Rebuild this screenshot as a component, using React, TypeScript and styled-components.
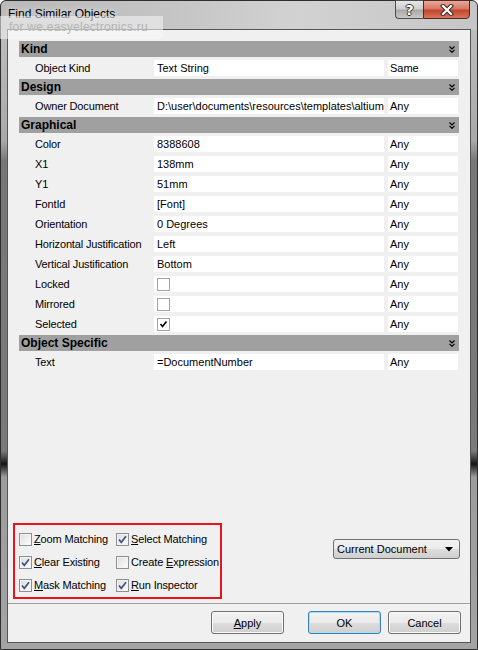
import React from "react";
import styled, { createGlobalStyle } from "styled-components";

type Prop = {
  name: string;
  value?: string;
  check?: boolean;
  checked?: boolean;
  match: string;
};

type Group = { title: string; rows: Prop[] };

const groups: Group[] = [
  { title: "Kind", rows: [{ name: "Object Kind", value: "Text String", match: "Same" }] },
  {
    title: "Design",
    rows: [
      {
        name: "Owner Document",
        value: "D:\\user\\documents\\resources\\templates\\altium",
        match: "Any",
      },
    ],
  },
  {
    title: "Graphical",
    rows: [
      { name: "Color", value: "8388608", match: "Any" },
      { name: "X1", value: "138mm", match: "Any" },
      { name: "Y1", value: "51mm", match: "Any" },
      { name: "FontId", value: "[Font]", match: "Any" },
      { name: "Orientation", value: "0 Degrees", match: "Any" },
      { name: "Horizontal Justification", value: "Left", match: "Any" },
      { name: "Vertical Justification", value: "Bottom", match: "Any" },
      { name: "Locked", check: true, checked: false, match: "Any" },
      { name: "Mirrored", check: true, checked: false, match: "Any" },
      { name: "Selected", check: true, checked: true, match: "Any" },
    ],
  },
  { title: "Object Specific", rows: [{ name: "Text", value: "=DocumentNumber", match: "Any" }] },
];

const options = [
  { label: "Zoom Matching", accel: 0, checked: false },
  { label: "Select Matching", accel: 0, checked: true },
  { label: "Clear Existing", accel: 0, checked: true },
  { label: "Create Expression", accel: 7, checked: false },
  { label: "Mask Matching", accel: 0, checked: true },
  { label: "Run Inspector", accel: 0, checked: true },
];

const withAccel = (label: string, i: number) => (
  <>
    {label.slice(0, i)}
    <Accel>{label[i]}</Accel>
    {label.slice(i + 1)}
  </>
);

const Chevrons = () => (
  <svg width="6" height="7" viewBox="0 0 6 7">
    <polyline points="0.5,0.5 3,3 5.5,0.5" fill="none" stroke="#000" strokeWidth="1.2" />
    <polyline points="0.5,3.8 3,6.3 5.5,3.8" fill="none" stroke="#000" strokeWidth="1.2" />
  </svg>
);

const CloseGlyph = () => (
  <svg width="16" height="12" viewBox="0 0 16 12">
    <path d="M4 2 L12 10 M12 2 L4 10" stroke="#3a2a2a" strokeWidth="4.2" strokeLinecap="square" />
    <path d="M4 2 L12 10 M12 2 L4 10" stroke="#fff" strokeWidth="2.2" strokeLinecap="square" />
  </svg>
);

export default function App() {
  return (
    <>
      <GlobalStyle />
      <Window>
        <TitleBar>
          <Title>Find Similar Objects</Title>
          <CaptionButtons>
            <HelpButton>?</HelpButton>
            <CloseButton>
              <CloseGlyph />
            </CloseButton>
          </CaptionButtons>
        </TitleBar>
        <Watermark>for we.easyelectronics.ru</Watermark>
        <Client>
          <Grid>
            {groups.map((g) => (
              <Section key={g.title}>
                <Header>
                  <span>{g.title}</span>
                  <Chevrons />
                </Header>
                {g.rows.map((r) => (
                  <Row key={r.name}>
                    <Name>{r.name}</Name>
                    <Cell>
                      {r.check ? (
                        <FlatBox>
                          {r.checked && (
                            <svg width="11" height="11" viewBox="0 0 11 11">
                              <path d="M2.5 5 L4.5 7.5 L8.5 2.5" fill="none" stroke="#000" strokeWidth="1.6" />
                            </svg>
                          )}
                        </FlatBox>
                      ) : (
                        r.value
                      )}
                    </Cell>
                    <MatchCell>{r.match}</MatchCell>
                  </Row>
                ))}
              </Section>
            ))}
          </Grid>
          <OptionsRow>
            <OptionBox>
              {options.map((o) => (
                <Option key={o.label}>
                  <CheckBox>
                    {o.checked && (
                      <svg width="11" height="11" viewBox="0 0 11 11">
                        <path d="M2 5.5 L4.3 8.3 L9 2.2" fill="none" stroke="#3f5383" strokeWidth="1.7" />
                      </svg>
                    )}
                  </CheckBox>
                  <span>{withAccel(o.label, o.accel)}</span>
                </Option>
              ))}
            </OptionBox>
            <Select>
              <span>Current Document</span>
              <svg width="8" height="5" viewBox="0 0 8 5">
                <path d="M0 0 H8 L4 4.5 Z" fill="#000" />
              </svg>
            </Select>
          </OptionsRow>
          <ButtonBar>
            <Button>{withAccel("Apply", 0)}</Button>
            <Spacer />
            <Button $default>OK</Button>
            <Button>Cancel</Button>
          </ButtonBar>
        </Client>
      </Window>
    </>
  );
}

const GlobalStyle = createGlobalStyle`
  html, body {
    margin: 0;
    padding: 0;
    background: #fff;
  }
  body {
    font-family: "Liberation Sans", Arial, sans-serif;
    font-size: 11px;
    color: #000;
  }
`;

const Window = styled.div`
  position: relative;
  width: 478px;
  height: 650px;
  box-sizing: border-box;
  border: 1px solid #2e2e2e;
  border-radius: 6px 6px 0 0;
  padding: 0 6px 6px;
  display: flex;
  flex-direction: column;
  background:
    linear-gradient(to right, #b9b9b9 0%, #c4c4c4 35%, #d2d2d2 62%, #c6c6c6 100%) top / 100% 29px no-repeat,
    linear-gradient(
      to bottom,
      #c2c2c2 0,
      #a9a9a9 140px,
      #777 160px,
      #7a7a7a 450px,
      #151515 463px,
      #9c9c9c 476px,
      #a4a4a4 100%
    );
`;

const TitleBar = styled.div`
  height: 28px;
  display: flex;
  align-items: flex-start;
  justify-content: space-between;
  padding-left: 1px;
`;

const Title = styled.div`
  font-size: 12px;
  line-height: 12px;
  margin-top: 7px;
  color: #000;
  text-shadow: 0 0 6px rgba(255, 255, 255, 0.9);
`;

const CaptionButtons = styled.div`
  display: flex;
  margin-right: 1px;
  margin-top: -1px;
`;

const HelpButton = styled.div`
  width: 28px;
  height: 19px;
  box-sizing: border-box;
  border: 1px solid #4d4d4d;
  border-right: none;
  border-radius: 0 0 0 4px;
  background: linear-gradient(to bottom, #e6e6e6 0%, #cfcfcf 45%, #a9a9a9 55%, #c9c9c9 100%);
  color: #fff;
  font-family: "DejaVu Sans", sans-serif;
  font-weight: bold;
  font-size: 14px;
  line-height: 18px;
  text-align: center;
  text-shadow: 1px 0 #333, -1px 0 #333, 0 1px #333, 0 -1px #333;
`;

const CloseButton = styled.div`
  width: 47px;
  height: 19px;
  box-sizing: border-box;
  border: 1px solid #4d2b22;
  border-radius: 0 0 4px 0;
  display: flex;
  align-items: center;
  justify-content: center;
  background: linear-gradient(to bottom, #e8a999 0%, #d47a66 45%, #c3452c 55%, #d8755b 100%);
`;

const Watermark = styled.div`
  position: absolute;
  left: -1px;
  top: 15px;
  width: 154px;
  height: 21px;
  padding: 2px 0 0 9px;
  box-sizing: content-box;
  background: rgba(248, 248, 248, 0.55);
  color: #b4b4b4;
  font-size: 12px;
  letter-spacing: 0.25px;
  line-height: 19px;
  white-space: nowrap;
`;

const Client = styled.div`
  flex: 1;
  display: flex;
  flex-direction: column;
  background: #f0f0f0;
  border: 1px solid #555;
`;

const Grid = styled.div`
  display: flex;
  flex-direction: column;
  gap: 3px;
  padding: 11px 11px 0;
`;

const Section = styled.div`
  display: flex;
  flex-direction: column;
  gap: 3px;
`;

const Header = styled.div`
  height: 16px;
  background: #a0a0a0;
  display: flex;
  align-items: center;
  justify-content: space-between;
  padding: 0 4px 0 2px;
  font-weight: bold;
  font-size: 12px;
`;

const Row = styled.div`
  display: grid;
  grid-template-columns: 135px 230px 74px;
  height: 16px;
  line-height: 16px;

  & + & {
    margin-top: 1px;
  }
`;

const Name = styled.div`
  padding-left: 16px;
  white-space: nowrap;
  letter-spacing: -0.15px;
`;

const Cell = styled.div`
  background: #fff;
  padding-left: 3px;
  overflow: hidden;
  white-space: nowrap;
  display: flex;
  align-items: center;
`;

const MatchCell = styled(Cell)`
  margin-left: 4px;
  padding-left: 2px;
`;

const FlatBox = styled.div`
  width: 13px;
  height: 13px;
  box-sizing: border-box;
  border: 1px solid #a4a4a4;
  background: #fff;
  display: flex;
  align-items: center;
  justify-content: center;
`;

const OptionsRow = styled.div`
  margin-top: auto;
  display: flex;
  align-items: flex-start;
  justify-content: space-between;
  padding: 0 10px 0 5px;
`;

const OptionBox = styled.div`
  width: 209px;
  height: 76px;
  box-sizing: border-box;
  border: 2px solid #e8141c;
  display: grid;
  grid-template-columns: 97px 1fr;
  grid-auto-rows: 13px;
  row-gap: 10px;
  padding: 8px 0 0 4px;
`;

const Option = styled.div`
  display: flex;
  align-items: center;
  gap: 2px;
  white-space: nowrap;
  line-height: 13px;
  letter-spacing: -0.15px;
`;

const CheckBox = styled.div`
  width: 13px;
  height: 13px;
  box-sizing: border-box;
  border: 1px solid #8e8f8f;
  box-shadow: inset 0 0 0 1px #f4f4f4;
  background: linear-gradient(135deg, #dcdcdc 0%, #f4f4f4 70%, #fcfcfc 100%);
  display: flex;
  align-items: center;
  justify-content: center;
  flex-shrink: 0;
`;

const Accel = styled.span`
  text-decoration: underline;
`;

const Select = styled.div`
  width: 127px;
  height: 20px;
  margin-top: 16px;
  box-sizing: border-box;
  border: 1px solid #707070;
  border-radius: 3px;
  background: linear-gradient(to bottom, #f2f2f2 0%, #ebebeb 50%, #dddddd 51%, #cfcfcf 100%);
  display: flex;
  align-items: center;
  justify-content: space-between;
  padding: 0 6px 0 3px;
`;

const ButtonBar = styled.div`
  margin-top: 4px;
  border-top: 1px solid #a0a0a0;
  display: flex;
  gap: 7px;
  padding: 7px 9px 8px 0;
`;

const Spacer = styled.div`
  flex: 1;
`;

const Button = styled.div<{ $default?: boolean }>`
  width: 73px;
  height: 23px;
  box-sizing: border-box;
  border: 1px solid ${(p) => (p.$default ? "#3c7fb1" : "#707070")};
  border-radius: 3px;
  box-shadow: inset 0 0 0 1px ${(p) => (p.$default ? "#a9e0f7" : "#fbfbfb")};
  background: linear-gradient(to bottom, #f2f2f2 0%, #ebebeb 50%, #dddddd 51%, #cfcfcf 100%);
  display: flex;
  align-items: center;
  justify-content: center;
  font-size: 11px;

  &:first-child {
    margin-left: 203px;
  }
`;
